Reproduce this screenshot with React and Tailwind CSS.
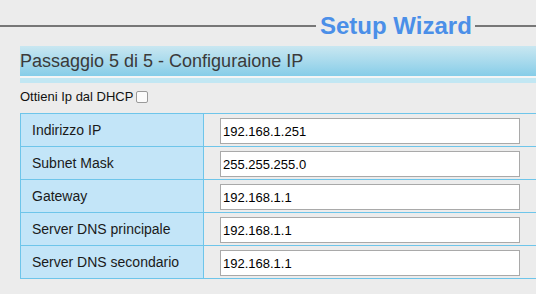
import React from 'react';

const rows = [
  { label: 'Indirizzo IP', value: '192.168.1.251' },
  { label: 'Subnet Mask', value: '255.255.255.0' },
  { label: 'Gateway', value: '192.168.1.1' },
  { label: 'Server DNS principale', value: '192.168.1.1' },
  { label: 'Server DNS secondario', value: '192.168.1.1' },
];

const App = () => {
  return (
    <div className="w-[536px] h-[294px] overflow-hidden bg-[#ececec] font-['Liberation_Sans',Arial,sans-serif]">
      {/* title with rule */}
      <div className="mt-[12px] h-[28px] flex items-center">
        <div className="w-[316px] h-[2px] bg-[#777]" />
        <span className="ml-[4px] mr-[3px] text-[24px] leading-[28px] font-bold text-[#4b8fe8] whitespace-nowrap">
          Setup Wizard
        </span>
        <div className="flex-1 h-[2px] bg-[#777]" />
      </div>

      <div className="pl-[20px] mt-[6px]">
        <div className="h-[30px] flex items-center bg-gradient-to-b from-[#c9e7f1] to-[#86cde8] text-[18px] text-[#3a3a3a] whitespace-nowrap">
          Passaggio 5 di 5 - Configuraione IP
        </div>
        <div className="h-[2px] bg-[#f5f5f5]" />
        <div className="h-[5px] bg-[#c2e7f3]" />

        <div className="h-[28px] flex items-center text-[13px] text-[#111]">
          <span>Ottieni Ip dal DHCP</span>
          <span className="ml-[3px] w-[12px] h-[12px] border border-[#9a9a9a] rounded-[2px] bg-[#fbfbfb]" />
        </div>

        <div className="mt-[2px] border-t border-l border-[#6ec5ea]">
          {rows.map((r) => (
            <div key={r.label} className="h-[33px] flex border-b border-[#6ec5ea]">
              <div className="w-[183px] shrink-0 flex items-center pl-[11px] bg-[#c3e5f8] border-r border-[#6ec5ea] text-[14px] text-[#1a1a1a] whitespace-nowrap">
                {r.label}
              </div>
              <div className="flex-1 pl-[16px] pt-[4px]">
                <input
                  type="text"
                  defaultValue={r.value}
                  className="w-[300px] h-[26px] bg-white border border-[#a9a9a9] px-[2px] text-[13px] text-black outline-none"
                />
              </div>
            </div>
          ))}
        </div>
      </div>
    </div>
  );
};

export default App;
